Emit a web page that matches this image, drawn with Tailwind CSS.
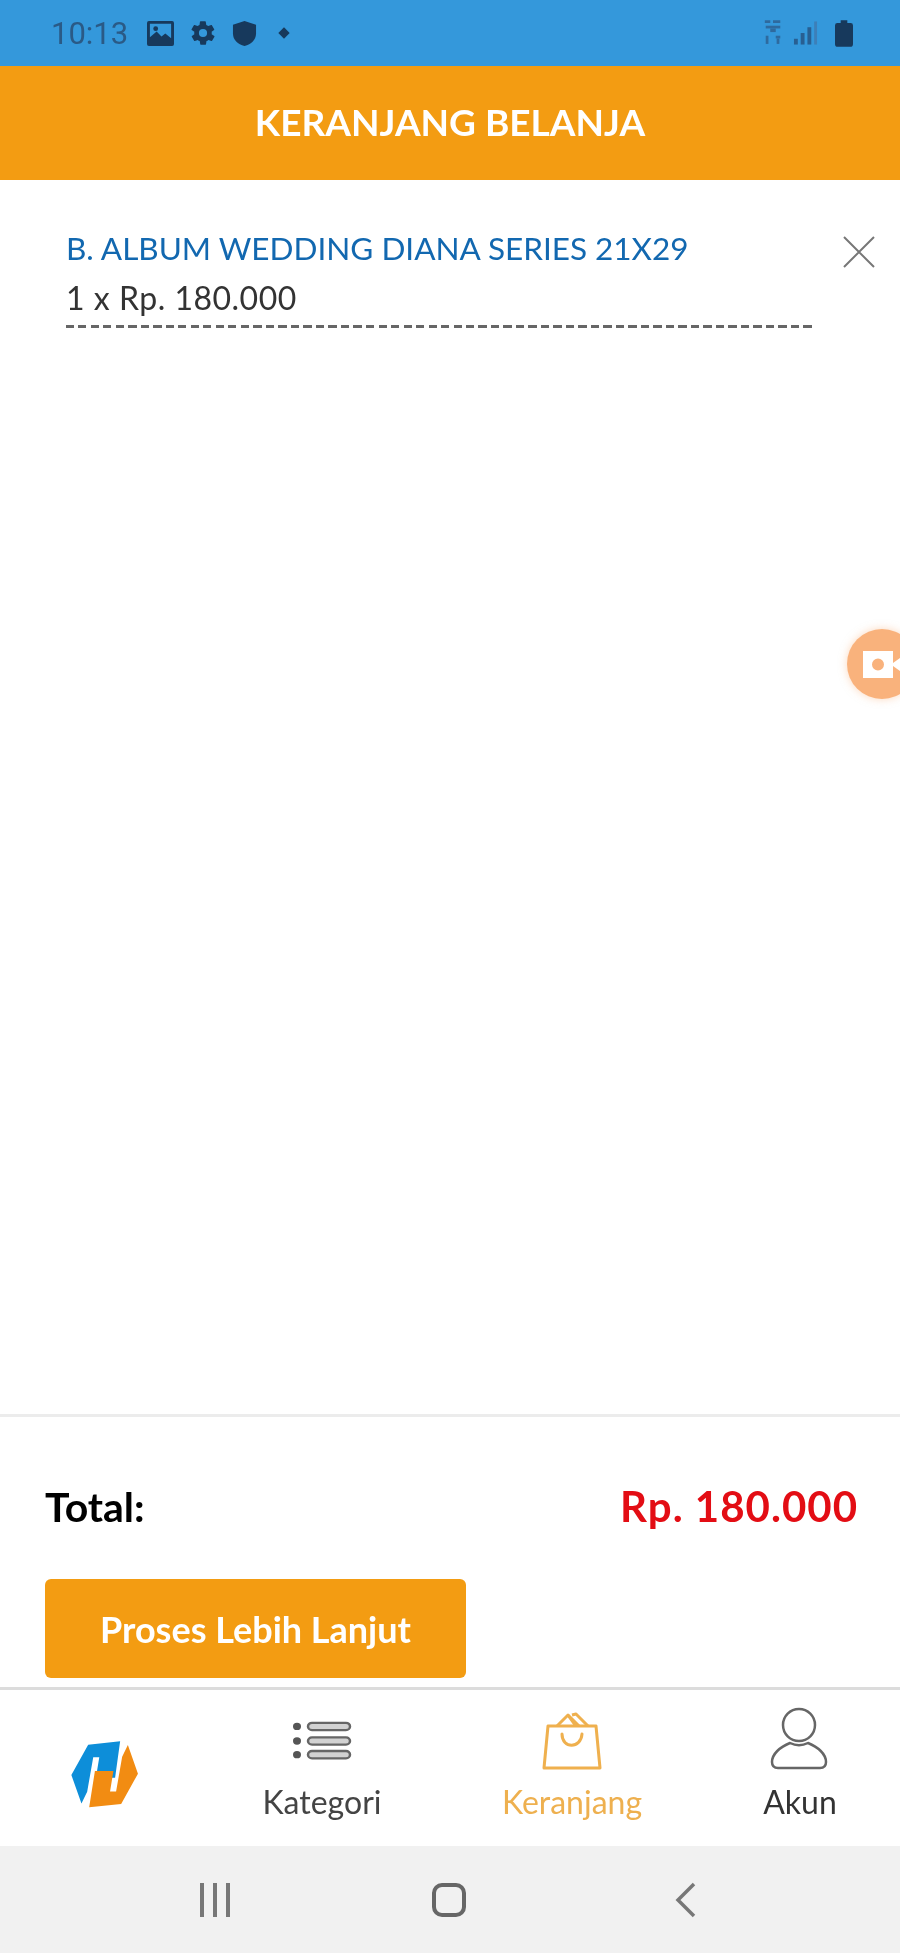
<!DOCTYPE html>
<html lang="id">
<head>
<meta charset="utf-8">
<title>Keranjang Belanja</title>
<script src="https://cdn.jsdelivr.net/npm/@tailwindcss/browser@4"></script>
</head>
<body class="bg-white">
<div class="relative w-[900px] h-[1953px] flex flex-col overflow-hidden bg-white blur-[0.6px] font-['Lato','Liberation_Sans',sans-serif]">
  <!-- status bar -->
  <div class="h-[66px] shrink-0 bg-[#3498db] flex items-center pl-[51px] pr-[47px]">
    <span class="text-[31px] leading-none font-['Roboto',sans-serif] text-[#2a5a86] w-[82px]">10:13</span>
    <svg class="ml-[13px]" width="29" height="27" viewBox="0 0 30 28"><path fill="#17395c" fill-rule="evenodd" d="M3 1h24a2 2 0 0 1 2 2v22a2 2 0 0 1-2 2H3a2 2 0 0 1-2-2V3a2 2 0 0 1 2-2zm1 3v14l7-6 5 5 4-3 6 5V4z"/><circle cx="10" cy="9" r="2.5" fill="#17395c"/></svg>
    <svg class="ml-[14px]" width="28" height="28" viewBox="0 0 24 24"><path fill="#17395c" d="M19.4 13c.1-.3.1-.7.1-1s0-.7-.1-1l2.1-1.6c.2-.2.2-.4.1-.6l-2-3.5c-.1-.2-.4-.3-.6-.2l-2.5 1c-.5-.4-1.100-.7-1.700-1l-.4-2.600c0-.3-.2-.5-.5-.5h-4c-.3 0-.5.2-.5.400l-.4 2.700c-.6.3-1.200.6-1.700 1l-2.500-1c-.2-.1-.5 0-.6.2l-2 3.500c-.1.200-.1.400.1.600L4.600 11c-.1.300-.1.700-.1 1s0 .7.1 1l-2.100 1.600c-.2.200-.2.400-.1.600l2 3.500c.1.200.4.300.6.200l2.500-1c.5.400 1.100.700 1.700 1l.4 2.600c0 .3.200.5.500.5h4c.3 0 .5-.2.5-.5l.4-2.600c.6-.3 1.200-.6 1.700-1l2.500 1c.2.100.5 0 .6-.2l2-3.500c.1-.2.100-.4-.1-.6zM12 15.500a3.500 3.500 0 1 1 0-7 3.500 3.500 0 0 1 0 7z"/></svg>
    <svg class="ml-[15px]" width="25" height="27" viewBox="0 0 26 28"><path fill="#17395c" d="M13 1 25 5v9c0 6.500-5 11.500-12 13C6 25.500 1 20.500 1 14V5z"/></svg>
    <span class="ml-[23px] w-[8px] h-[8px] rotate-45 bg-[#17395c]"></span>
    <div class="ml-auto flex items-center">
      <svg width="20" height="28" viewBox="0 0 22 30"><g fill="#2e6a9e"><rect x="2" y="1" width="6" height="3"/><rect x="11" y="1" width="8" height="3"/><rect x="3" y="7" width="16" height="3"/><rect x="8" y="10" width="6" height="4"/><rect x="3" y="18" width="3" height="9"/><rect x="14" y="18" width="5" height="3"/><rect x="15" y="21" width="3" height="6"/></g></svg>
      <svg class="ml-[10px]" width="25" height="26" viewBox="0 0 26 26"><g fill="#285f92"><rect x="1" y="19" width="4" height="6"/><rect x="8" y="13" width="4" height="12"/><rect x="15" y="7" width="4" height="18"/><rect x="22" y="1" width="3" height="24" fill="#3d7fb8"/></g></svg>
      <svg class="ml-[17px]" width="18" height="27" viewBox="0 0 19 28"><path fill="#17395c" d="M6 0h7v3h3.500A2.500 2.500 0 0 1 19 5.500V25a3 3 0 0 1-3 3H3a3 3 0 0 1-3-3V5.500A2.500 2.500 0 0 1 2.500 3H6z"/></svg>
    </div>
  </div>

  <!-- header -->
  <div class="h-[114px] shrink-0 bg-[#f39c12] flex items-center justify-center pb-[3px]">
    <h1 class="text-[37px] leading-none font-bold text-white">KERANJANG BELANJA</h1>
  </div>

  <!-- cart list -->
  <div class="flex-1 min-h-0 pt-[46px] pl-[66px] pr-[25px]">
    <div class="flex items-start">
      <div class="w-[748px]">
        <p class="text-[31.5px] leading-[44px] text-[#1268b0]">B. ALBUM WEDDING DIANA SERIES 21X29</p>
        <p class="mt-[6px] text-[32px] leading-[44px] tracking-[0.5px] text-[#333]">1 x Rp. 180.000</p>
        <div class="mt-[5px] h-[3px] bg-[repeating-linear-gradient(90deg,#666_0_8px,transparent_8px_12.5px)]"></div>
      </div>
      <svg class="ml-[29px] mt-[10px]" width="32" height="32" viewBox="0 0 32 32"><path d="M1 1l30 30M31 1 1 31" stroke="#777" stroke-width="2" fill="none"/></svg>
    </div>
  </div>

  <!-- total -->
  <div class="h-[273px] shrink-0 border-t-[3px] border-[#ececec] px-[45px] pt-[59px]">
    <div class="flex items-center justify-between h-[60px]">
      <span class="text-[41px] leading-none font-bold text-black">Total:</span>
      <span class="text-[42px] leading-none font-bold tracking-[1px] text-[#e30d14] mr-[-3px]">Rp. 180.000</span>
    </div>
    <button class="mt-[43px] w-[421px] h-[99px] rounded-[6px] bg-[#f39c12] text-white text-[36px] font-bold flex items-center justify-center">Proses Lebih Lanjut</button>
  </div>

  <!-- bottom nav -->
  <div class="h-[159px] shrink-0 border-t-[3px] border-[#dcdcdc] grid grid-cols-[210px_224px_276px_180px] pr-[10px] bg-white">
    <div class="flex items-center justify-center pt-[14px]">
      <svg width="74" height="74" viewBox="205 175 220 220">
        <path fill="#0d8ed9" d="M215 285 265 195 360 185 345 293 288 293 298 232 280 232 262 335 245 370z"/>
        <path fill="#f28c12" d="M413 281 363 371 268 381 285 273 340 273 330 334 348 334 366 231 383 196z"/>
      </svg>
    </div>
    <div class="flex flex-col items-center pt-[31px]">
      <svg width="60" height="40" viewBox="0 0 60 44" preserveAspectRatio="none"><g fill="#555"><circle cx="5" cy="6" r="4"/><circle cx="5" cy="22" r="4"/><circle cx="5" cy="37" r="4"/></g><g fill="#d2d2d2" stroke="#666" stroke-width="2.500"><rect x="16" y="2" width="42" height="8" rx="4"/><rect x="16" y="18" width="42" height="8" rx="4"/><rect x="16" y="33" width="42" height="8" rx="4"/></g></svg>
      <span class="mt-[21px] text-[32px] leading-[40px] text-[#444]">Kategori</span>
    </div>
    <div class="flex flex-col items-center pt-[22px]">
      <svg width="60" height="58" viewBox="0 0 60 58" fill="none" stroke="#efb04e" stroke-width="3"><path d="M6 14h48l4 42H2z" stroke-linejoin="round"/><path d="M15 14 26 3l11 11M30 3l4-1 12 12M26 3l8 11" stroke-linejoin="round"/><path d="M20 22c0 15 19 15 20 0" stroke-linecap="round"/></svg>
      <span class="mt-[12px] text-[32px] leading-[40px] text-[#eeb04f]">Keranjang</span>
    </div>
    <div class="flex flex-col items-center pt-[17px]">
      <svg width="60" height="64" viewBox="0 0 60 64" fill="none" stroke="#666" stroke-width="2.500"><circle cx="29" cy="18" r="16"/><path d="M20 36C10 40 2 47 2 55c0 4 2 6 6 6h42c4 0 6-2 6-6 0-8-8-15-18-19-6 3-12 3-18 0z" stroke-linejoin="round"/></svg>
      <span class="mt-[11px] text-[32px] leading-[40px] text-[#333]">Akun</span>
    </div>
  </div>

  <!-- system nav -->
  <div class="h-[107px] shrink-0 bg-[#f1f1f1] grid grid-cols-[432px_34px_1fr] items-center">
    <div class="flex justify-end mr-[202px] gap-[9px]">
      <span class="w-[4px] h-[34px] bg-[#777]"></span><span class="w-[4px] h-[34px] bg-[#777]"></span><span class="w-[4px] h-[34px] bg-[#777]"></span>
    </div>
    <div class="w-[34px] h-[34px] rounded-[10px] border-[4px] border-[#666]"></div>
    <div class="pl-[209px]">
      <svg width="22" height="36" viewBox="0 0 22 36" fill="none" stroke="#777" stroke-width="3.500"><path d="M19 2 3 18l16 16"/></svg>
    </div>
  </div>

  <!-- floating recorder button -->
  <div class="absolute left-[847px] top-[629px] w-[70px] h-[70px] rounded-full bg-[#f9b27c] shadow-[0_0_8px_rgba(249,178,124,0.5)] flex items-center pl-[16px]">
    <svg class="shrink-0" width="37" height="27" viewBox="0 0 37 27"><path fill="#fff" fill-rule="evenodd" d="M0 0h30v27H0zm15 7.500a6 6 0 1 0 0 12 6 6 0 0 0 0-12z"/><path fill="#fff" d="M30 12l7-5v13l-7-5z"/></svg>
  </div>
</div>
</body>
</html>
